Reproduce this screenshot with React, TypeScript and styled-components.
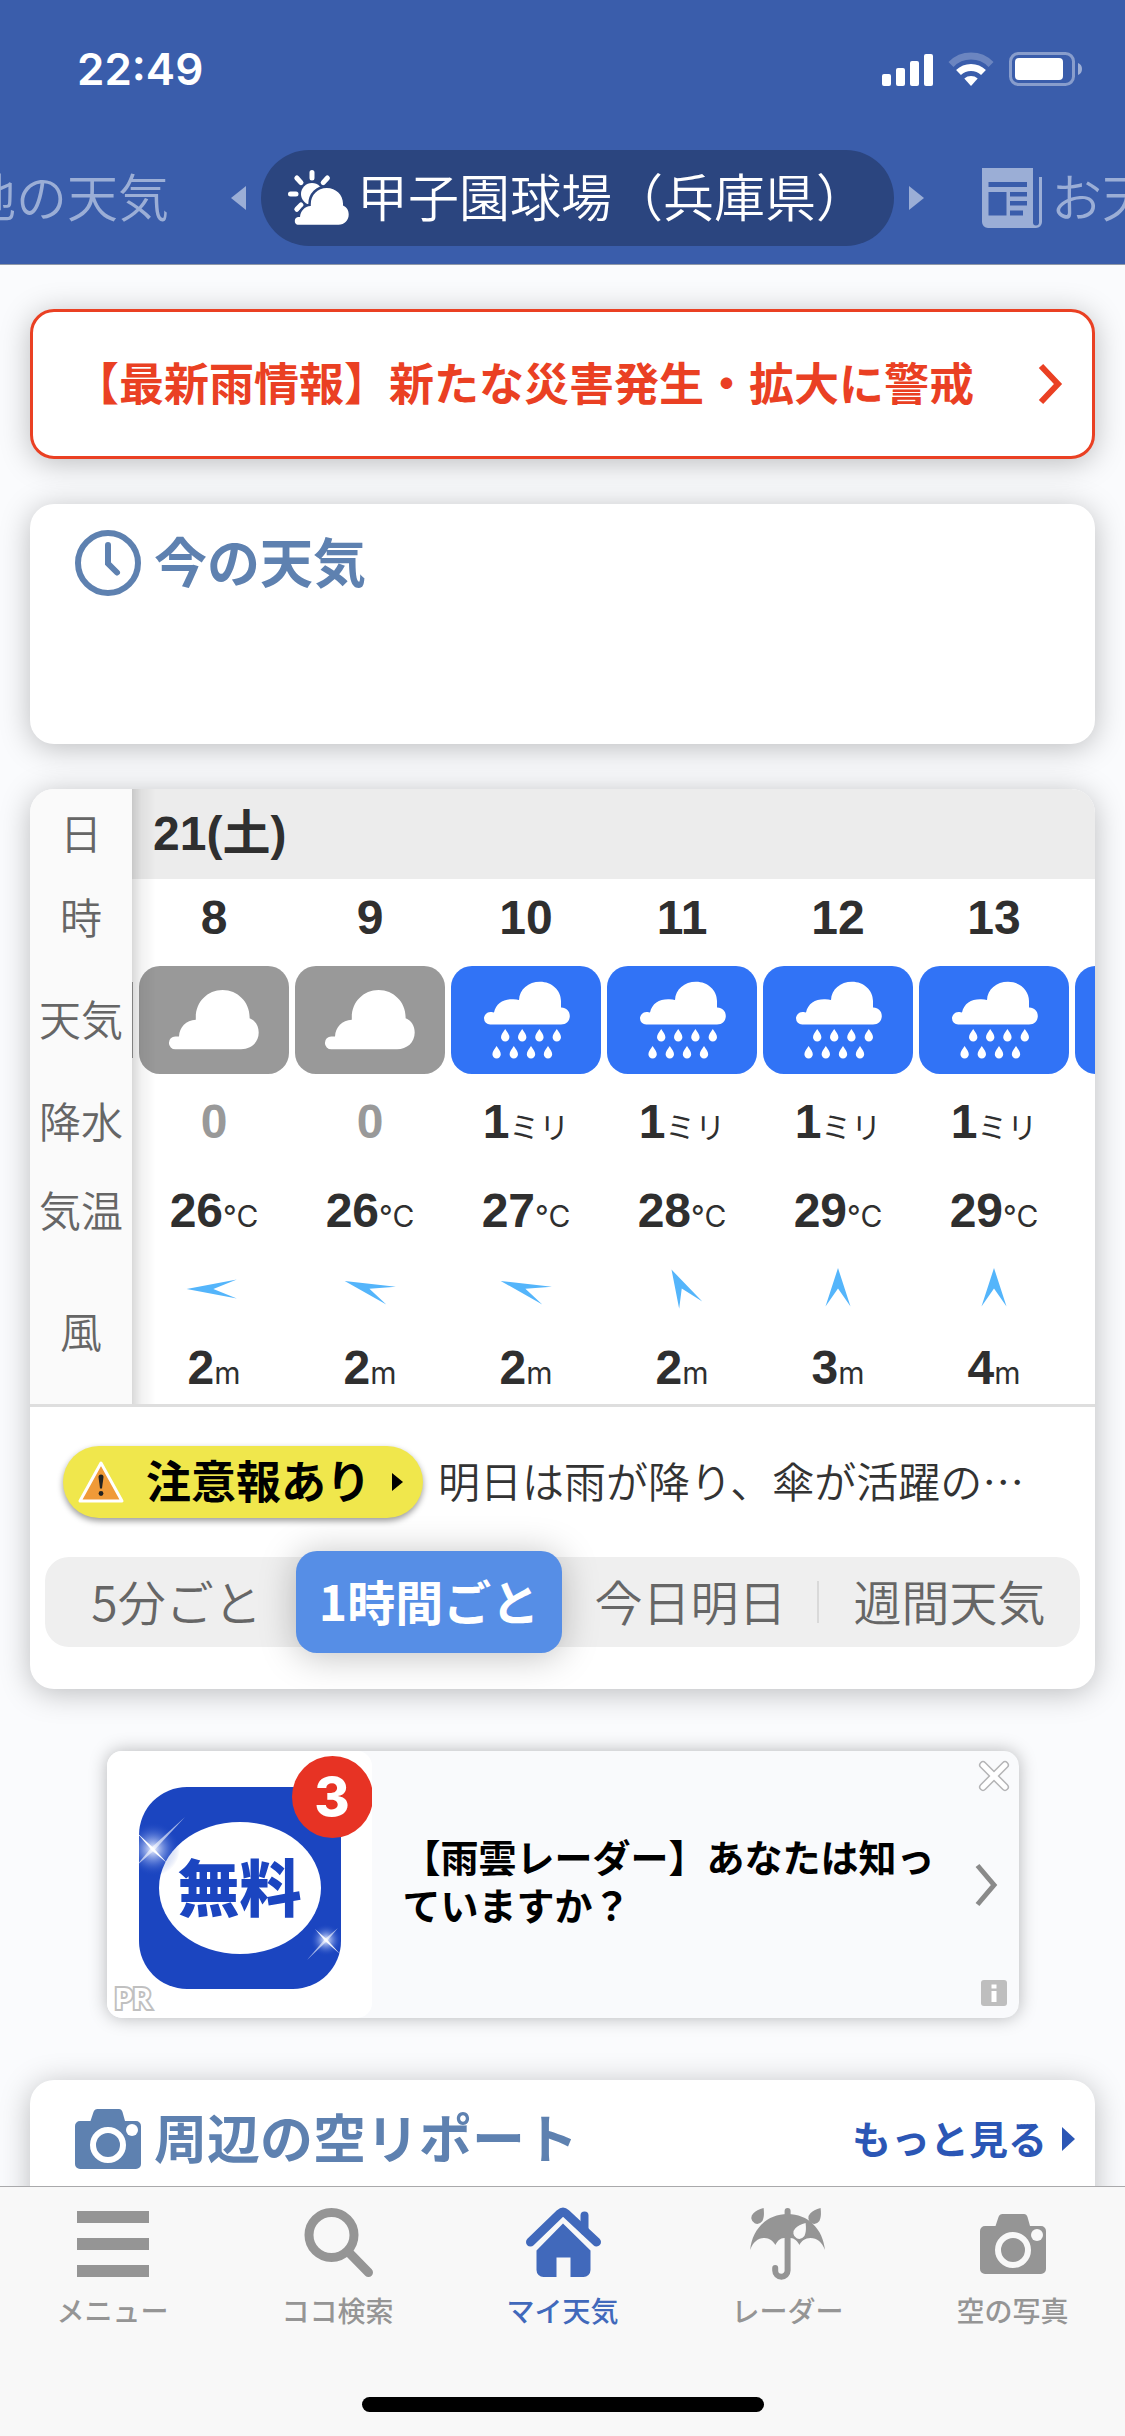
import React from "react";
import styled, { createGlobalStyle, css } from "styled-components";

const JP = `"Noto Sans CJK JP", sans-serif`;
const NUM = `"Liberation Sans", "Noto Sans CJK JP", sans-serif`;

const Global = createGlobalStyle`
  *, *::before, *::after { box-sizing: border-box; }
  html, body { margin: 0; padding: 0; background: #fafbfd; }
  body { font-family: ${JP}; color: #333; }
  button { font: inherit; color: inherit; border: 0; background: none; padding: 0; margin: 0; cursor: pointer; }
  a { color: inherit; text-decoration: none; }
  h2, p { margin: 0; }
  svg { display: block; flex: none; }
`;

const Screen = styled.div`
  height: 100vh;
  display: flex;
  flex-direction: column;
  overflow: hidden;
  background: #fafbfd;
`;

/* Japanese glyphs sit low in their line box; this lifts them to the optical middle. */
const Kana = styled.span`
  display: block;
  padding-bottom: 0.1em;
`;

/* ---------- header ---------- */

const Header = styled.header`
  flex: none;
  background: #3a5dab;
  border-bottom: 1px solid #8f98a8;
  overflow: hidden;
`;

const StatusBar = styled.div`
  height: 138px;
  padding: 0 42px 0 77px;
  display: flex;
  align-items: center;
  justify-content: space-between;
  color: #fff;
`;

const Clock = styled.time`
  font: 600 44px/56px Inter, sans-serif;
`;

const StatusIcons = styled.div`
  display: flex;
  align-items: center;
  gap: 15px;
`;

const PlaceNav = styled.nav`
  display: grid;
  grid-template-columns: 1fr auto 1fr;
  align-items: center;
  column-gap: 15px;
  padding: 12px 0 18px 30px;
  font-size: 51px;
  line-height: 72px;
  font-weight: 350;
  white-space: nowrap;
`;

const SidePlace = styled.div<{ $end?: boolean }>`
  min-width: 0;
  display: flex;
  align-items: center;
  gap: ${(p) => (p.$end ? 62 : 58)}px;
  justify-content: ${(p) => (p.$end ? "flex-end" : "flex-start")};
  color: #9baed6;
`;

const PlaceButton = styled.button`
  flex: none;
  display: flex;
  align-items: center;
  gap: 9px;
`;

const CurrentPlace = styled.button`
  height: 96px;
  padding: 0 27px;
  display: flex;
  align-items: center;
  gap: 8px;
  border-radius: 48px;
  background: #2b457f;
  color: #fff;
`;

/* ---------- cards ---------- */

const Main = styled.main`
  flex: 1;
  min-height: 0;
  overflow-y: auto;
  scrollbar-width: none;
  display: flex;
  flex-direction: column;
  gap: 45px;
  padding: 44px 30px 0;
`;

const cardShadow = css`
  box-shadow: 0 4px 30px rgba(0, 0, 0, 0.25);
`;

const Card = styled.section`
  flex: none;
  border-radius: 24px;
  background: #fff;
  ${cardShadow}
`;

const AlertLink = styled.a`
  flex: none;
  height: 150px;
  padding: 0 28px 0 41px;
  display: flex;
  align-items: center;
  justify-content: space-between;
  border: 3px solid #ea4023;
  border-radius: 24px;
  background: #fff;
  color: #ea4023;
  font-size: 45px;
  line-height: 66px;
  font-weight: 700;
  white-space: nowrap;
  ${cardShadow}
`;

const PanelCard = styled(Card)`
  min-height: 240px;
  padding: 20px 20px 0 45px;
`;

const PanelHead = styled.div`
  display: flex;
  align-items: center;
  justify-content: space-between;
`;

const PanelTitle = styled.h2`
  height: 78px;
  display: flex;
  align-items: center;
  gap: 13px;
  color: #5e81b0;
  font-size: 53px;
  line-height: 72px;
  font-weight: 700;
`;

const MoreLink = styled.a`
  display: flex;
  align-items: center;
  gap: 15px;
  color: #2b56b5;
  font-size: 39px;
  line-height: 57px;
  font-weight: 700;
`;

/* ---------- forecast table ---------- */

const TableScroll = styled.div`
  overflow-x: auto;
  scrollbar-width: none;
  border-radius: 24px 24px 0 0;
  border-bottom: 3px solid #dedede;
`;

const Table = styled.table`
  width: 1198px;
  table-layout: fixed;
  border-collapse: collapse;
  font-family: ${NUM};
  color: #2f2f2f;
`;

const LabelCol = styled.col`
  width: 102px;
`;

const EdgeCol = styled.col`
  width: 4px;
`;

const Row = styled.tr<{ $h: number }>`
  height: ${(p) => p.$h}px;
`;

const RowLabel = styled.th`
  position: sticky;
  left: 0;
  z-index: 1;
  padding: 0 0 4px;
  background: #fafafa;
  color: #666;
  font: 350 42px/60px ${JP};
  text-align: center;
  &::after {
    content: "";
    position: absolute;
    top: 0;
    bottom: 0;
    left: 100%;
    width: 24px;
    background: linear-gradient(to right, rgba(0, 0, 0, 0.15), rgba(0, 0, 0, 0.05) 40%, transparent);
    pointer-events: none;
  }
`;

const DateCell = styled.th`
  padding: 0 21px;
  background: #ececec;
  font-size: 48px;
  line-height: 60px;
  font-weight: 700;
  text-align: left;
`;

const HourCell = styled.th`
  padding: 0;
  font-size: 48px;
  line-height: 60px;
  font-weight: 700;
  text-align: center;
`;

const Cell = styled.td<{ $muted?: boolean }>`
  padding: 0;
  font-size: 48px;
  line-height: 60px;
  font-weight: 700;
  text-align: center;
  white-space: nowrap;
  color: ${(p) => (p.$muted ? "#999" : "inherit")};
`;

const Unit = styled.small`
  font: 400 30px/30px Inter, "Noto Sans CJK JP", sans-serif;
`;

const Tile = styled.div<{ $rain?: boolean }>`
  height: 108px;
  margin: 0 3px;
  border-radius: 21px;
  background: ${(p) => (p.$rain ? "#3173f6" : "#999")};
`;

const TileEdge = styled.div`
  width: 1px;
  height: 76px;
  background: #999;
`;

const Wind = styled.div`
  display: flex;
  flex-direction: column;
  align-items: center;
  gap: 26px;
`;

/* ---------- advice + period switch ---------- */

const Advice = styled.div`
  display: flex;
  align-items: center;
  gap: 15px;
  padding: 39px 33px;
`;

const WarningButton = styled.button`
  flex: none;
  width: 360px;
  height: 72px;
  padding: 0 20px 0 14px;
  display: flex;
  align-items: center;
  justify-content: space-between;
  border-radius: 36px;
  background: #f0e74c;
  box-shadow: 0 3px 6px rgba(0, 0, 0, 0.4);
  color: #000;
  font-size: 45px;
  line-height: 66px;
  font-weight: 700;
`;

const AdviceText = styled.p`
  font-size: 42px;
  line-height: 60px;
  font-weight: 350;
  white-space: nowrap;
`;

const Periods = styled.div`
  display: grid;
  grid-template-columns: 263fr 254fr 257fr 261fr;
  height: 90px;
  margin: 0 15px 42px;
  border-radius: 24px;
  background: #efefef;
`;

const Period = styled.button<{ $on?: boolean; $rule?: boolean }>`
  display: flex;
  align-items: center;
  justify-content: center;
  position: relative;
  font-size: 48px;
  line-height: 70px;
  font-weight: 350;
  color: #666;
  white-space: nowrap;
  ${(p) =>
    p.$on &&
    css`
      margin: -6px 0 -6px -12px;
      border-radius: 21px;
      background: #568ee6;
      color: #fff;
      font-weight: 700;
      box-shadow: 0 3px 36px rgba(0, 0, 0, 0.25);
    `}
  ${(p) =>
    p.$rule &&
    css`
      &::after {
        content: "";
        position: absolute;
        right: 0;
        top: 24px;
        width: 2px;
        height: 42px;
        background: #d9d9d9;
      }
    `}
`;

/* ---------- ad ---------- */

const Ad = styled.aside`
  flex: none;
  position: relative;
  align-self: center;
  width: 912px;
  height: 267px;
  margin: 17px 0;
  display: flex;
  align-items: center;
  border-radius: 15px;
  background: #f9fafc;
  box-shadow: 0 0 18px rgba(0, 0, 0, 0.28);
`;

const AdArt = styled.div`
  flex: none;
  position: relative;
  width: 265px;
  height: 267px;
  padding: 36px 32px;
  border-radius: 15px;
  background: #fff;
  overflow: hidden;
`;

const AppTile = styled.div`
  position: relative;
  width: 202px;
  height: 202px;
  display: flex;
  align-items: center;
  justify-content: center;
  border-radius: 48px;
  background: #1b45c0;
  overflow: hidden;
`;

const Oval = styled.div`
  width: 162px;
  height: 132px;
  display: flex;
  align-items: center;
  justify-content: center;
  border-radius: 50%;
  background: #fff;
  color: #1b45c0;
  font-size: 62px;
  line-height: 90px;
  font-weight: 900;
`;

const Sparkles = styled.svg`
  position: absolute;
  inset: 0;
`;

const Badge = styled.span`
  position: absolute;
  top: 5px;
  right: -1px;
  width: 81px;
  height: 82px;
  border-radius: 50%;
  background: #e73324;
  color: #fff;
  font: 800 54px/82px Inter, sans-serif;
  text-align: center;
`;

const PrMark = styled.span`
  position: absolute;
  left: 8px;
  bottom: 2px;
  color: #fff;
  font: 700 29px/36px Lato, sans-serif;
  -webkit-text-stroke: 4px #c0c0c0;
  paint-order: stroke fill;
`;

const AdText = styled.a`
  flex: 1;
  padding: 0 20px 0 31px;
  display: flex;
  align-items: center;
  justify-content: space-between;
  color: #000;
  font-size: 38px;
  line-height: 48px;
  font-weight: 700;
`;

const AdCopy = styled(Kana)`
  padding-bottom: 0.25em;
`;

const AdClose = styled.button`
  position: absolute;
  top: 9px;
  right: 9px;
`;

const AdInfo = styled.button`
  position: absolute;
  right: 12px;
  bottom: 12px;
`;

/* ---------- tab bar ---------- */

const TabBar = styled.nav`
  flex: none;
  height: 250px;
  display: flex;
  flex-direction: column;
  align-items: center;
  justify-content: space-between;
  padding-bottom: 24px;
  border-top: 1px solid #a9a9ab;
  background: #f8f8f8;
`;

const Tabs = styled.div`
  align-self: stretch;
  display: grid;
  grid-template-columns: repeat(5, 1fr);
  padding-top: 18px;
`;

const Tab = styled.button<{ $on?: boolean }>`
  display: flex;
  flex-direction: column;
  align-items: center;
  gap: 6px;
  color: ${(p) => (p.$on ? "#4169bb" : "#959595")};
  font-size: 28px;
  line-height: 42px;
  font-weight: 500;
`;

const HomeIndicator = styled.div`
  width: 402px;
  height: 15px;
  border-radius: 8px;
  background: #000;
`;

/* ---------- drawings ---------- */

const Triangle = ({ w, h, left }: { w: number; h: number; left?: boolean }) => (
  <svg width={w} height={h} viewBox="0 0 10 10" preserveAspectRatio="none" aria-hidden="true">
    <path d={left ? "M10 0V10L0 5Z" : "M0 0V10L10 5Z"} fill="currentColor" />
  </svg>
);

const SignalIcon = () => (
  <svg width="51" height="33" viewBox="0 0 51 33" fill="#fff" aria-hidden="true">
    <rect x="0" y="21" width="9" height="12" rx="2" />
    <rect x="14" y="15" width="9" height="18" rx="2" />
    <rect x="28" y="8" width="9" height="25" rx="2" />
    <rect x="42" y="1" width="9" height="32" rx="2" />
  </svg>
);

const WifiIcon = () => (
  <svg width="46" height="34" viewBox="0 0 46 34" fill="none" aria-hidden="true">
    <path d="M3 12.5A28 28 0 0 1 43 12.5" stroke="#fff" strokeOpacity=".25" strokeWidth="7" />
    <path d="M10.5 20.5A18 18 0 0 1 35.5 20.5" stroke="#fff" strokeWidth="7" />
    <path d="M23 34L16.3 26.5A10.5 10.5 0 0 1 29.7 26.5Z" fill="#fff" />
  </svg>
);

const BatteryIcon = () => (
  <svg width="74" height="34" viewBox="0 0 74 34" fill="none" aria-hidden="true">
    <rect x="1.5" y="1.5" width="63" height="31" rx="8" stroke="#fff" strokeOpacity=".4" strokeWidth="3" />
    <rect x="6" y="6" width="48" height="22" rx="4" fill="#fff" />
    <path d="M69 11a6.5 6.5 0 0 1 0 12Z" fill="#fff" fillOpacity=".5" />
  </svg>
);

const SunCloudIcon = () => (
  <svg width="61" height="56" viewBox="0 0 61 56" aria-hidden="true">
    <path d="M24 2.5V8M8.8 8L13 12.7M39.4 8L35.2 12.7M2.5 24H8M13 35L8.8 39.3" stroke="#fff" strokeWidth="5" strokeLinecap="round" />
    <circle cx="24" cy="24" r="11" fill="#fff" />
    <path
      d="M9.5 54.7A4 4 0 0 1 10 47H12C12.5 41 16.5 36.5 22.8 36V34C22.8 25 29.5 18 38.8 18C48 18 55 25 55 33.5V35.5C58.8 37 60.7 40.5 60.7 44.5C60.7 50.5 56.5 54.7 50.5 54.7Z"
      fill="#fff"
      stroke="#2b457f"
      strokeWidth="5"
      paintOrder="stroke"
    />
  </svg>
);

const NewsIcon = () => (
  <svg width="60" height="60" viewBox="0 0 60 60" aria-hidden="true">
    <path
      fill="currentColor"
      fillRule="evenodd"
      d="M0 0H51V54.5A3 3 0 0 0 57 54.5V9H60V54A6 6 0 0 1 54 60H6A6 6 0 0 1 0 54ZM6.5 14V19H45V14ZM6.5 24V47.5H24.5V24ZM28 24V28.5H45V24ZM28 33V37.5H45V33ZM28 42.5V47.5H41V42.5Z"
    />
  </svg>
);

const ClockIcon = () => (
  <svg width="66" height="66" viewBox="0 0 66 66" fill="none" stroke="currentColor" aria-hidden="true">
    <circle cx="33" cy="33" r="30" strokeWidth="6" />
    <path d="M33 15V33.5L42 42.5" strokeWidth="6" strokeLinecap="round" />
  </svg>
);

const CameraIcon = ({ hole }: { hole: string }) => (
  <svg width="66" height="60" viewBox="0 0 66 60" aria-hidden="true">
    <path d="M5 12H15.5L18.5 3Q19.5 0 22.5 0H44Q46.5 0 47.5 3L50 12H61A5 5 0 0 1 66 17V55A5 5 0 0 1 61 60H5A5 5 0 0 1 0 55V17A5 5 0 0 1 5 12Z" fill="currentColor" />
    <circle cx="33" cy="36" r="15" fill="currentColor" stroke={hole} strokeWidth="6" />
    <circle cx="57" cy="21" r="6" fill={hole} />
  </svg>
);

const CloudArt = () => (
  <svg width="100%" height="108" viewBox="0 0 150 108" fill="#fff" role="img" aria-label="くもり">
    <path d="M36.3 83.3A6.4 6.4 0 0 1 36.3 70.5H40C40.5 61 47 54 56.8 53.7V51C56.8 36 68.5 24 83.6 24C98.5 24 110.6 36 110.6 51V52.3C116.5 54.5 119.7 60 119.7 66.5C119.7 76.5 112 83.3 102 83.3Z" />
  </svg>
);

const drops = [
  [54.2, 63], [71.2, 63], [88.4, 63], [105.8, 63],
  [45.6, 80], [62.8, 80], [80, 80], [97, 80],
];

const RainArt = () => (
  <svg width="100%" height="108" viewBox="0 0 150 108" fill="#fff" role="img" aria-label="雨">
    <path d="M39.2 58.5A6.2 6.2 0 0 1 39.2 46.1Q41 45.7 43 46.4C45 37.5 52 33.2 61 33.2Q65 33 68 34C68.3 23.5 77.5 15.8 89 15.8C101 15.8 110 24.5 110 35V41.5C115 41.3 118.8 45 118.8 50C118.8 55 115 58.5 110 58.5Z" />
    {drops.map(([x, y]) => (
      <path key={`${x}-${y}`} d={`M${x} ${y}c2 3 4.2 5.4 4.2 8.3a4.2 4.2 0 0 1-8.4 0c0-2.9 2.2-5.3 4.2-8.3z`} />
    ))}
  </svg>
);

const WindArrow = ({ deg }: { deg: number }) => (
  <svg width="60" height="46" viewBox="-23 -23 46 46" preserveAspectRatio="none" role="img" aria-label="風向">
    <path d="M0-21L9.6 17.5L0-.5L-9.6 17.5Z" fill="#54b5fb" transform={`rotate(${deg})`} />
  </svg>
);

const WarnIcon = () => (
  <svg width="48" height="44" viewBox="0 0 48 44" aria-hidden="true">
    <path d="M24 3L45 41H3Z" fill="#f09a38" stroke="#fff" strokeWidth="3" strokeLinejoin="round" />
    <path d="M21.5 17a2.5 2.5 0 0 1 5 0L25 28.5H23Z" fill="#222" />
    <circle cx="24" cy="33.5" r="2.4" fill="#222" />
  </svg>
);

const Chevron = ({ w, h, stroke, color }: { w: number; h: number; stroke: number; color: string }) => (
  <svg width={w} height={h} viewBox={`0 0 ${w} ${h}`} fill="none" aria-hidden="true">
    <path d={`M${stroke / 2} ${stroke / 2}L${w - stroke} ${h / 2}L${stroke / 2} ${h - stroke / 2}`} stroke={color} strokeWidth={stroke} />
  </svg>
);

const SparkleArt = () => (
  <Sparkles width="202" height="202" viewBox="0 0 202 202" aria-hidden="true">
    <defs>
      <radialGradient id="glow">
        <stop offset="0" stopColor="#fff" stopOpacity="1" />
        <stop offset=".15" stopColor="#e4ebff" stopOpacity=".8" />
        <stop offset=".5" stopColor="#a9bdf2" stopOpacity=".4" />
        <stop offset="1" stopColor="#1b45c0" stopOpacity="0" />
      </radialGradient>
    </defs>
    <circle cx="14" cy="62" r="27" fill="url(#glow)" />
    <path d="M-2 46L14 60.5L28 76L13 63.5Z" fill="#fff" />
    <path d="M-3 79L12.5 60.5L46 30L15 63.5Z" fill="#fff" fillOpacity=".6" />
    <circle cx="187" cy="153" r="16" fill="url(#glow)" />
    <path d="M176 142L187.5 152L201 167L186 154Z" fill="#fff" fillOpacity=".9" />
    <path d="M199 141L186 152L168 173L188 154Z" fill="#fff" fillOpacity=".6" />
  </Sparkles>
);

const TabIcon = ({ children }: { children: React.ReactNode }) => (
  <svg width="78" height="78" viewBox="0 0 78 78" aria-hidden="true">
    {children}
  </svg>
);

const MenuIcon = () => (
  <TabIcon>
    <path d="M3 6H75V18H3ZM3 33H75V45H3ZM3 60H75V72H3Z" fill="currentColor" />
  </TabIcon>
);

const SearchIcon = () => (
  <TabIcon>
    <circle cx="32.5" cy="30" r="22.5" fill="none" stroke="currentColor" strokeWidth="9" />
    <path d="M49 46.5L69.5 67.5" stroke="currentColor" strokeWidth="9" strokeLinecap="round" />
  </TabIcon>
);

const HomeIcon = () => (
  <TabIcon>
    <path d="M6.5 37L36 8.5Q39 5.8 42 8.5L72.5 37" fill="none" stroke="currentColor" strokeWidth="9" strokeLinecap="round" strokeLinejoin="round" />
    <path d="M60.5 10.5V26" stroke="currentColor" strokeWidth="8" strokeLinecap="round" />
    <path d="M39 18.5L66.5 45.5V65A7 7 0 0 1 59.5 72H46.5V52.5H32.5V72H19.5A7 7 0 0 1 12.5 65V45.5Z" fill="currentColor" />
  </TabIcon>
);

const drop = "M14.6 3C15.2 8 15 11 14.3 13.5A6 6 0 1 1 4.2 8.5C6.5 6 10 4 14.6 3Z";

const UmbrellaIcon = () => (
  <TabIcon>
    <path d="M1.2 45C3 24 18 9 38.6 9C59 9 74 24 76 45C73 37 68 33 61.5 33C56 33 52.5 36 50.4 40C48.5 36 45 33 41.8 33H35.3C31 33 28.5 36 26.4 40C24 36 20.5 33 15.5 33C9 33 4 37 1.2 45Z" fill="currentColor" />
    <path d="M38.6 6V65.5A6.2 6.2 0 0 1 26.2 65.5V63" fill="none" stroke="currentColor" strokeWidth="6" strokeLinecap="round" />
    <path d={drop} fill="currentColor" />
    <path d={drop} fill="currentColor" transform="translate(57 0)" />
    <path d={drop} fill="#f8f8f8" transform="translate(42 15)" />
  </TabIcon>
);

const TabCameraIcon = () => (
  <TabIcon>
    <svg x="6" y="9" width="66" height="60">
      <CameraIcon hole="#f8f8f8" />
    </svg>
  </TabIcon>
);

/* ---------- data ---------- */

const hours = [
  { hour: 8, rain: 0, temp: 26, deg: -90, wind: 2 },
  { hour: 9, rain: 0, temp: 26, deg: -67.5, wind: 2 },
  { hour: 10, rain: 1, temp: 27, deg: -67.5, wind: 2 },
  { hour: 11, rain: 1, temp: 28, deg: -22.5, wind: 2 },
  { hour: 12, rain: 1, temp: 29, deg: 0, wind: 3 },
  { hour: 13, rain: 1, temp: 29, deg: 0, wind: 4 },
];

const tabs = [
  { label: "メニュー", Icon: MenuIcon },
  { label: "ココ検索", Icon: SearchIcon },
  { label: "マイ天気", Icon: HomeIcon, on: true },
  { label: "レーダー", Icon: UmbrellaIcon },
  { label: "空の写真", Icon: TabCameraIcon },
];

const ForecastTable = () => (
  <TableScroll>
    <Table>
      <colgroup>
        <LabelCol />
        <EdgeCol />
        {hours.map((h) => (
          <col key={h.hour} />
        ))}
        <col />
      </colgroup>
      <tbody>
        <Row $h={90}>
          <RowLabel scope="row">日</RowLabel>
          <DateCell colSpan={8}>21(土)</DateCell>
        </Row>
        <Row $h={78}>
          <RowLabel scope="row">時</RowLabel>
          <td />
          {hours.map((h) => (
            <HourCell key={h.hour} scope="col">{h.hour}</HourCell>
          ))}
          <td />
        </Row>
        <Row $h={126}>
          <RowLabel scope="row">天気</RowLabel>
          <Cell>
            <TileEdge />
          </Cell>
          {hours.map((h) => (
            <Cell key={h.hour}>
              <Tile $rain={h.rain > 0}>{h.rain > 0 ? <RainArt /> : <CloudArt />}</Tile>
            </Cell>
          ))}
          <Cell>
            <Tile $rain />
          </Cell>
        </Row>
        <Row $h={78}>
          <RowLabel scope="row">降水</RowLabel>
          <td />
          {hours.map((h) => (
            <Cell key={h.hour} $muted={h.rain === 0}>
              {h.rain}
              {h.rain > 0 && <Unit>ミリ</Unit>}
            </Cell>
          ))}
          <td />
        </Row>
        <Row $h={99}>
          <RowLabel scope="row">気温</RowLabel>
          <td />
          {hours.map((h) => (
            <Cell key={h.hour}>
              {h.temp}
              <Unit>°C</Unit>
            </Cell>
          ))}
          <td />
        </Row>
        <Row $h={144}>
          <RowLabel scope="row">風</RowLabel>
          <td />
          {hours.map((h) => (
            <Cell key={h.hour}>
              <Wind>
                <WindArrow deg={h.deg} />
                <span>
                  {h.wind}
                  <Unit>m</Unit>
                </span>
              </Wind>
            </Cell>
          ))}
          <td />
        </Row>
      </tbody>
    </Table>
  </TableScroll>
);

export default function App() {
  return (
    <Screen>
      <Global />
      <Header>
        <StatusBar>
          <Clock>22:49</Clock>
          <StatusIcons>
            <SignalIcon />
            <WifiIcon />
            <BatteryIcon />
          </StatusIcons>
        </StatusBar>
        <PlaceNav>
          <SidePlace $end>
            <PlaceButton>
              <Kana>地の天気</Kana>
            </PlaceButton>
            <Triangle w={15} h={24} left />
          </SidePlace>
          <CurrentPlace>
            <SunCloudIcon />
            <Kana>甲子園球場（兵庫県）</Kana>
          </CurrentPlace>
          <SidePlace>
            <Triangle w={15} h={24} />
            <PlaceButton>
              <NewsIcon />
              <Kana>お天気</Kana>
            </PlaceButton>
          </SidePlace>
        </PlaceNav>
      </Header>

      <Main>
        <AlertLink href="#alert">
          <Kana>【最新雨情報】新たな災害発生・拡大に警戒</Kana>
          <Chevron w={26} h={42} stroke={6} color="#ea4023" />
        </AlertLink>

        <PanelCard>
          <PanelTitle>
            <ClockIcon />
            <Kana>今の天気</Kana>
          </PanelTitle>
        </PanelCard>

        <Card>
          <ForecastTable />
          <Advice>
            <WarningButton>
              <WarnIcon />
              <Kana>注意報あり</Kana>
              <Triangle w={11} h={18} />
            </WarningButton>
            <AdviceText>
              <Kana>明日は雨が降り、傘が活躍の…</Kana>
            </AdviceText>
          </Advice>
          <Periods>
            <Period>
              <Kana>5分ごと</Kana>
            </Period>
            <Period $on>
              <Kana>1時間ごと</Kana>
            </Period>
            <Period $rule>
              <Kana>今日明日</Kana>
            </Period>
            <Period>
              <Kana>週間天気</Kana>
            </Period>
          </Periods>
        </Card>

        <Ad>
          <AdArt>
            <AppTile>
              <Oval>
                <Kana>無料</Kana>
              </Oval>
              <SparkleArt />
            </AppTile>
            <Badge>3</Badge>
            <PrMark>PR</PrMark>
          </AdArt>
          <AdText href="#radar">
            <AdCopy>
              【雨雲レーダー】あなたは知っ
              <br />
              ていますか？
            </AdCopy>
            <Chevron w={24} h={44} stroke={5} color="#8a8a8a" />
          </AdText>
          <AdClose aria-label="閉じる">
            <svg width="32" height="32" viewBox="0 0 32 32" fill="none" strokeLinecap="round" aria-hidden="true">
              <path d="M5 5L27 27M27 5L5 27" stroke="#b4b4b6" strokeWidth="8" />
              <path d="M5 5L27 27M27 5L5 27" stroke="#fff" strokeWidth="5" />
            </svg>
          </AdClose>
          <AdInfo aria-label="広告について">
            <svg width="26" height="26" viewBox="0 0 26 26" aria-hidden="true">
              <rect width="26" height="26" rx="3" fill="#bebebe" />
              <path d="M10.5 4.5H15.5V8.5H10.5ZM10.5 11H15.5V22H10.5Z" fill="#fff" />
            </svg>
          </AdInfo>
        </Ad>

        <PanelCard>
          <PanelHead>
            <PanelTitle>
              <CameraIcon hole="#fff" />
              <Kana>周辺の空リポート</Kana>
            </PanelTitle>
            <MoreLink href="#more">
              <Kana>もっと見る</Kana>
              <Triangle w={13} h={24} />
            </MoreLink>
          </PanelHead>
        </PanelCard>
      </Main>

      <TabBar>
        <Tabs>
          {tabs.map(({ label, Icon, on }) => (
            <Tab key={label} $on={on}>
              <Icon />
              {label}
            </Tab>
          ))}
        </Tabs>
        <HomeIndicator />
      </TabBar>
    </Screen>
  );
}
